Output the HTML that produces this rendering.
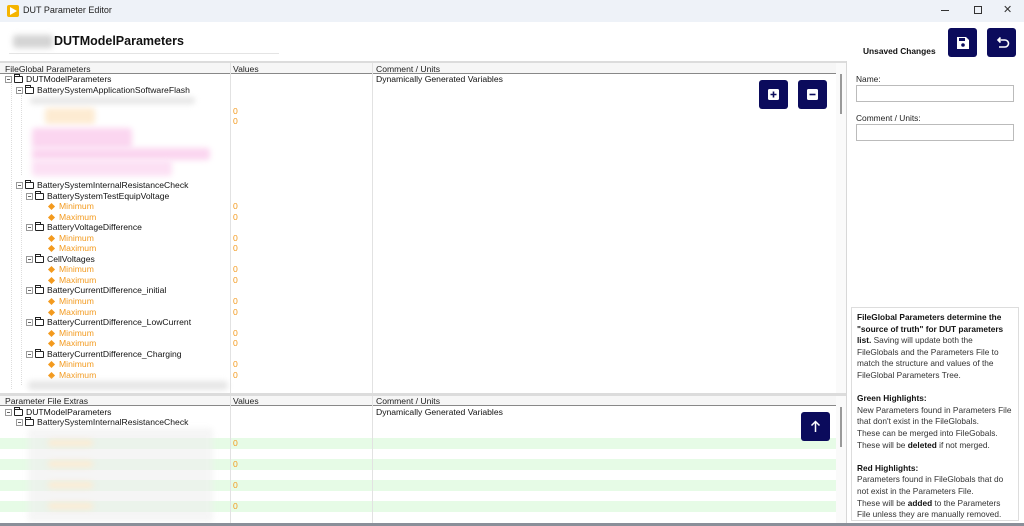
<!DOCTYPE html>
<html><head><meta charset="utf-8">
<style>
*{margin:0;padding:0;box-sizing:border-box}
body{width:1024px;height:526px;overflow:hidden;background:#fff;font-family:"Liberation Sans",sans-serif;position:relative;color:#111}
.a{position:absolute}
.t{font-size:8.6px;line-height:10.56px;height:10.56px;white-space:nowrap;position:absolute}
.or{color:#f39a1e}
.btn{position:absolute;width:29px;height:29px;background:#0b0b5c;border-radius:3px}
.fold{display:inline-block;width:9px;height:7px;border:1px solid #222;border-radius:1px;vertical-align:-1px;margin-right:3px;position:relative}
.fold:before{content:"";position:absolute;left:-1px;top:-3px;width:4px;height:2px;border:1px solid #222;border-bottom:none}
.mb{display:inline-block;width:7px;height:7px;border:1px solid #999;margin-right:2px;vertical-align:-1px;position:relative}
.mb:after{content:"";position:absolute;left:1px;top:2px;width:3px;height:1px;background:#666}
.dia{display:inline-block;width:5px;height:5px;background:#f39a1e;transform:rotate(45deg);margin-right:5px;vertical-align:0px}
.blur{position:absolute;filter:blur(3px);border-radius:3px}
.hd{position:absolute;font-size:8.6px;color:#222;line-height:10px}
</style></head><body>
<div class="a" style="left:0;top:0;width:1024px;height:22px;background:#eef2f8"></div>
<div class="a" style="left:7px;top:5px;width:12px;height:12px;background:#f5b400;border-radius:2px"></div>
<div class="a" style="left:10px;top:7px;width:0;height:0;border-left:7px solid #fff;border-top:4px solid transparent;border-bottom:4px solid transparent"></div>
<div class="a" style="left:23px;top:5px;font-size:9px;color:#222">DUT Parameter Editor</div>
<div class="a" style="left:941px;top:10px;width:8px;height:1px;background:#333"></div>
<div class="a" style="left:974px;top:6px;width:8px;height:8px;border:1px solid #333"></div>
<div class="a" style="left:1003px;top:3px;font-size:11px;color:#333">✕</div>
<div class="blur" style="left:13px;top:35px;width:40px;height:13px;background:#d4d4d4"></div>
<div class="a" style="left:54px;top:34px;font-size:12.5px;font-weight:bold;color:#111">DUTModelParameters</div>
<div class="a" style="left:9px;top:53px;width:270px;height:1px;background:#e4e4e4"></div>
<div class="a" style="left:863px;top:46px;font-size:8.4px;font-weight:bold">Unsaved Changes</div>
<div class="btn" style="left:948px;top:28px"><svg width="29" height="29" viewBox="0 0 29 29"><path d="M9 9h9l3 3v9H9z" fill="#fff"/><rect x="11" y="10" width="6" height="3" fill="#0b0b5c"/><circle cx="15" cy="17" r="1.8" fill="#0b0b5c"/></svg></div>
<div class="btn" style="left:987px;top:28px"><svg width="29" height="29" viewBox="0 0 29 29"><path d="M11 12h7a3.5 3.5 0 0 1 0 7h-6" fill="none" stroke="#fff" stroke-width="1.6"/><path d="M13.5 9.5L11 12l2.5 2.5" fill="none" stroke="#fff" stroke-width="1.6"/></svg></div>
<div class="a" style="left:0;top:61px;width:846px;height:2px;background:#dcdcdc"></div>
<div class="a" style="left:0;top:63px;width:836px;height:11px;background:#f6f6f6;border-bottom:1px solid #888"></div>
<div class="hd" style="left:5px;top:63.5px">FileGlobal Parameters</div>
<div class="hd" style="left:233px;top:63.5px">Values</div>
<div class="hd" style="left:376px;top:63.5px">Comment / Units</div>
<div class="a" style="left:230px;top:63px;width:1px;height:330px;background:#e2e2e2"></div>
<div class="a" style="left:372px;top:63px;width:1px;height:330px;background:#e2e2e2"></div>
<div class="a" style="left:836px;top:63px;width:10px;height:330px;background:#fafafa"></div>
<div class="a" style="left:840px;top:74px;width:2px;height:40px;background:#999"></div>
<div class="a" style="left:846px;top:61px;width:1px;height:465px;background:#d8d8d8"></div>
<div class="a" style="left:11px;top:84px;width:0;height:305px;border-left:1px dotted #ddd"></div>
<div class="a" style="left:21px;top:95px;width:0;height:80px;border-left:1px dotted #ddd"></div>
<div class="a" style="left:21px;top:190px;width:0;height:195px;border-left:1px dotted #ddd"></div>
<div class="t" style="left:5px;top:74px"><span class="mb"></span><span class="fold"></span>DUTModelParameters</div>
<div class="t" style="left:376px;top:74px">Dynamically Generated Variables</div>
<div class="t" style="left:16px;top:84.5px"><span class="mb"></span><span class="fold"></span>BatterySystemApplicationSoftwareFlash</div>
<div class="blur" style="left:30px;top:97px;width:165px;height:7px;background:#e6e6e6"></div>
<div class="blur" style="left:45px;top:108px;width:50px;height:16px;background:#fdebd2"></div>
<div class="t or" style="left:233px;top:105.5px">0</div>
<div class="t or" style="left:233px;top:116px">0</div>
<div class="blur" style="left:32px;top:128px;width:100px;height:20px;background:#fbd6f0"></div>
<div class="blur" style="left:32px;top:148px;width:178px;height:12px;background:#fbd6f0"></div>
<div class="blur" style="left:32px;top:160px;width:140px;height:16px;background:#fce0f4"></div>
<div class="t" style="left:16px;top:180px"><span class="mb"></span><span class="fold"></span>BatterySystemInternalResistanceCheck</div>
<div class="t" style="left:26px;top:190.5px"><span class="mb"></span><span class="fold"></span>BatterySystemTestEquipVoltage</div>
<div class="t or" style="left:49px;top:201px"><span class="dia"></span>Minimum</div><div class="t or" style="left:233px;top:201px">0</div>
<div class="t or" style="left:49px;top:211.5px"><span class="dia"></span>Maximum</div><div class="t or" style="left:233px;top:211.5px">0</div>
<div class="t" style="left:26px;top:222px"><span class="mb"></span><span class="fold"></span>BatteryVoltageDifference</div>
<div class="t or" style="left:49px;top:232.6px"><span class="dia"></span>Minimum</div><div class="t or" style="left:233px;top:232.6px">0</div>
<div class="t or" style="left:49px;top:243.2px"><span class="dia"></span>Maximum</div><div class="t or" style="left:233px;top:243.2px">0</div>
<div class="t" style="left:26px;top:253.7px"><span class="mb"></span><span class="fold"></span>CellVoltages</div>
<div class="t or" style="left:49px;top:264.3px"><span class="dia"></span>Minimum</div><div class="t or" style="left:233px;top:264.3px">0</div>
<div class="t or" style="left:49px;top:274.8px"><span class="dia"></span>Maximum</div><div class="t or" style="left:233px;top:274.8px">0</div>
<div class="t" style="left:26px;top:285.4px"><span class="mb"></span><span class="fold"></span>BatteryCurrentDifference_initial</div>
<div class="t or" style="left:49px;top:296px"><span class="dia"></span>Minimum</div><div class="t or" style="left:233px;top:296px">0</div>
<div class="t or" style="left:49px;top:306.5px"><span class="dia"></span>Maximum</div><div class="t or" style="left:233px;top:306.5px">0</div>
<div class="t" style="left:26px;top:317px"><span class="mb"></span><span class="fold"></span>BatteryCurrentDifference_LowCurrent</div>
<div class="t or" style="left:49px;top:327.6px"><span class="dia"></span>Minimum</div><div class="t or" style="left:233px;top:327.6px">0</div>
<div class="t or" style="left:49px;top:338.2px"><span class="dia"></span>Maximum</div><div class="t or" style="left:233px;top:338.2px">0</div>
<div class="t" style="left:26px;top:348.7px"><span class="mb"></span><span class="fold"></span>BatteryCurrentDifference_Charging</div>
<div class="t or" style="left:49px;top:359.3px"><span class="dia"></span>Minimum</div><div class="t or" style="left:233px;top:359.3px">0</div>
<div class="t or" style="left:49px;top:369.8px"><span class="dia"></span>Maximum</div><div class="t or" style="left:233px;top:369.8px">0</div>
<div class="blur" style="left:28px;top:381px;width:200px;height:9px;background:#e6e6e6"></div>
<div class="btn" style="left:759px;top:80px"><svg width="29" height="29"><rect x="9" y="9" width="11" height="11" rx="1.5" fill="#fff"/><path d="M14.5 11.5v6M11.5 14.5h6" stroke="#0b0b5c" stroke-width="1.6"/></svg></div>
<div class="btn" style="left:798px;top:80px"><svg width="29" height="29"><rect x="9" y="9" width="11" height="11" rx="1.5" fill="#fff"/><path d="M11.5 14.5h6" stroke="#0b0b5c" stroke-width="1.6"/></svg></div>
<div class="a" style="left:0;top:393px;width:846px;height:3px;background:#dcdcdc"></div>
<div class="a" style="left:0;top:396px;width:836px;height:10px;background:#f6f6f6;border-bottom:1px solid #888"></div>
<div class="hd" style="left:5px;top:396px">Parameter File Extras</div>
<div class="hd" style="left:233px;top:396px">Values</div>
<div class="hd" style="left:376px;top:396px">Comment / Units</div>
<div class="a" style="left:0;top:438px;width:836px;height:10.5px;background:#e6fbe6"></div>
<div class="a" style="left:0;top:459px;width:836px;height:10.5px;background:#e6fbe6"></div>
<div class="a" style="left:0;top:480px;width:836px;height:10.5px;background:#e6fbe6"></div>
<div class="a" style="left:0;top:501px;width:836px;height:10.5px;background:#e6fbe6"></div>
<div class="a" style="left:230px;top:396px;width:1px;height:127px;background:#e2e2e2"></div>
<div class="a" style="left:372px;top:396px;width:1px;height:127px;background:#e2e2e2"></div>
<div class="a" style="left:836px;top:396px;width:10px;height:127px;background:#fafafa"></div>
<div class="a" style="left:840px;top:407px;width:2px;height:40px;background:#999"></div>
<div class="t" style="left:5px;top:406.5px"><span class="mb"></span><span class="fold"></span>DUTModelParameters</div>
<div class="t" style="left:376px;top:406.5px">Dynamically Generated Variables</div>
<div class="t" style="left:16px;top:417px"><span class="mb"></span><span class="fold"></span>BatterySystemInternalResistanceCheck</div>
<div class="blur" style="left:28px;top:428px;width:185px;height:94px;background:#efefef;opacity:.6"></div>
<div class="blur" style="left:48px;top:440px;width:45px;height:6px;background:#fdebd2"></div>
<div class="blur" style="left:48px;top:461px;width:45px;height:6px;background:#fdebd2"></div>
<div class="blur" style="left:48px;top:482px;width:45px;height:6px;background:#fdebd2"></div>
<div class="blur" style="left:48px;top:503px;width:45px;height:6px;background:#fdebd2"></div>
<div class="t or" style="left:233px;top:438px">0</div>
<div class="t or" style="left:233px;top:459px">0</div>
<div class="t or" style="left:233px;top:480px">0</div>
<div class="t or" style="left:233px;top:501px">0</div>
<div class="btn" style="left:801px;top:412px"><svg width="29" height="29"><path d="M14.5 20V9.5M10.5 13.5l4-4 4 4" fill="none" stroke="#fff" stroke-width="1.5"/></svg></div>
<div class="a" style="left:0;top:523px;width:1024px;height:3px;background:#8a8f99"></div>
<div class="a" style="left:856px;top:74px;font-size:8.4px;color:#222">Name:</div>
<div class="a" style="left:856px;top:85px;width:158px;height:17px;border:1px solid #bbb"></div>
<div class="a" style="left:856px;top:113px;font-size:8.4px;color:#222">Comment / Units:</div>
<div class="a" style="left:856px;top:124px;width:158px;height:17px;border:1px solid #bbb"></div>
<div class="a" style="left:851px;top:307px;width:168px;height:214px;border:1px solid #ddd;padding:4px 5px;font-size:8.3px;line-height:11.6px;color:#333">
<b style="color:#111">FileGlobal Parameters determine the "source of truth" for DUT parameters list.</b> Saving will update both the FileGlobals and the Parameters File to match the structure and values of the FileGlobal Parameters Tree.<br><br>
<b style="color:#111">Green Highlights:</b><br>New Parameters found in Parameters File that don't exist in the FileGlobals.<br>These can be merged into FileGobals.<br>These will be <b style="color:#111">deleted</b> if not merged.<br><br>
<b style="color:#111">Red Highlights:</b><br>Parameters found in FileGlobals that do not exist in the Parameters File.<br>These will be <b style="color:#111">added</b> to the Parameters File unless they are manually removed.
</div>
</body></html>
